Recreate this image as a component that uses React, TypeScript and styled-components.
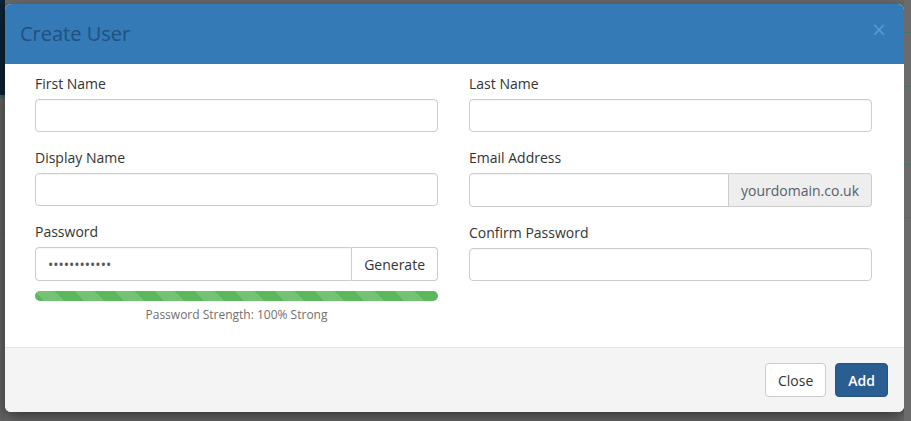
import React from 'react';
import styled, { createGlobalStyle } from 'styled-components';

const GlobalStyle = createGlobalStyle`
  html, body {
    margin: 0;
    padding: 0;
    background: #6a6a6a;
    font-family: "Open Sans", "Liberation Sans", sans-serif;
    font-size: 14px;
    color: #333;
  }
  * { box-sizing: border-box; }
`;

type Field = {
  label: string;
  kind?: 'text' | 'password' | 'addon';
  addon?: string;
};

const leftFields: Field[] = [
  { label: 'First Name' },
  { label: 'Display Name' },
  { label: 'Password', kind: 'password' },
];

const rightFields: Field[] = [
  { label: 'Last Name' },
  { label: 'Email Address', kind: 'addon', addon: 'yourdomain.co.uk' },
  { label: 'Confirm Password' },
];

function FormField({ field }: { field: Field }) {
  if (field.kind === 'password') {
    return (
      <Group>
        <Label>{field.label}</Label>
        <InputGroup>
          <Input type="password" defaultValue="Xk7pQ2mZr9Lb" grouped />
          <GroupButton type="button">Generate</GroupButton>
        </InputGroup>
        <Progress>
          <ProgressBar style={{ width: '100%' }} />
        </Progress>
        <Strength>Password Strength: 100% Strong</Strength>
      </Group>
    );
  }
  if (field.kind === 'addon') {
    return (
      <Group>
        <Label>{field.label}</Label>
        <InputGroup>
          <Input type="text" grouped />
          <Addon>{field.addon}</Addon>
        </InputGroup>
      </Group>
    );
  }
  return (
    <Group>
      <Label>{field.label}</Label>
      <Input type="text" />
    </Group>
  );
}

export default function App() {
  return (
    <>
      <GlobalStyle />
      <Stage>
        <LeftEdge />
        <Modal>
          <Header>
            <Title>Create User</Title>
            <CloseX aria-label="Close">×</CloseX>
          </Header>
          <Body>
            <Column>
              {leftFields.map(f => <FormField key={f.label} field={f} />)}
            </Column>
            <Column>
              {rightFields.map(f => <FormField key={f.label} field={f} />)}
            </Column>
          </Body>
          <Footer>
            <Button type="button">Close</Button>
            <Button type="button" primary>Add</Button>
          </Footer>
        </Modal>
        <RightEdge />
      </Stage>
    </>
  );
}

const Stage = styled.div`
  display: flex;
  align-items: flex-start;
  width: 911px;
  height: 421px;
  overflow: hidden;
  background: #6a6a6a;
`;
const LeftEdge = styled.div`
  width: 5px;
  height: 421px;
  flex: none;
  background: linear-gradient(
    to bottom,
    #0d2235 0px,
    #0d2235 95px,
    #2d6a6c 95px,
    #2d6a6c 98px,
    #646464 98px,
    #646464 233px,
    #3f6a6c 233px,
    #3f6a6c 234px,
    #646464 234px
  );
`;
const RightEdge = styled.div`
  flex: 1;
  height: 421px;
  background: linear-gradient(
    to bottom,
    #6b6b6b 0px,
    #6b6b6b 32px,
    #4a7272 32px,
    #4a7272 33px,
    #6b6b6b 33px,
    #6b6b6b 86px,
    #4a7272 86px,
    #4a7272 87px,
    #6b6b6b 87px,
    #6b6b6b 164px,
    #4a7272 164px,
    #4a7272 165px,
    #6b6b6b 165px,
    #6b6b6b 217px,
    #4a7272 217px,
    #4a7272 218px,
    #6b6b6b 218px
  );
`;
const Modal = styled.div`
  width: 899px;
  flex: none;
  margin-top: 4px;
  background: #fff;
  border-radius: 6px;
  box-shadow: 0 5px 15px rgba(0, 0, 0, 0.5);
  overflow: hidden;
  display: flex;
  flex-direction: column;
`;
const Header = styled.div`
  height: 60px;
  background: #337ab7;
  display: flex;
  align-items: center;
  justify-content: space-between;
  padding: 0 17px 0 15px;
`;
const Title = styled.h4`
  margin: 0;
  font-size: 20px;
  font-weight: 400;
  line-height: 1.2;
  color: #21507f;
`;
const CloseX = styled.button`
  border: 0;
  background: transparent;
  padding: 0;
  margin-top: -10px;
  font-family: "DejaVu Sans", "Liberation Sans", sans-serif;
  font-size: 19px;
  font-weight: 400;
  line-height: 1;
  color: rgba(255, 255, 255, 0.22);
  cursor: pointer;
`;
const Body = styled.div`
  display: grid;
  grid-template-columns: 403px 403px;
  column-gap: 31px;
  align-items: start;
  padding: 10px 32px 24px 30px;
`;
const Column = styled.div`
  display: flex;
  flex-direction: column;
  gap: 16px;
`;
const Group = styled.div`
  display: flex;
  flex-direction: column;
`;
const Label = styled.label`
  display: block;
  height: 20px;
  font-size: 14px;
  font-weight: 500;
  line-height: 20px;
  color: #333;
  margin-bottom: 5px;
`;
const Input = styled.input<{ grouped?: boolean }>`
  height: 34px;
  width: 100%;
  min-width: 0;
  flex: 1;
  padding: 6px 12px;
  font-family: "Open Sans", "Liberation Sans", sans-serif;
  font-size: 14px;
  color: #555;
  background: #fff;
  border: 1px solid #ccc;
  border-radius: ${props => (props.grouped ? '4px 0 0 4px' : '4px')};
  box-shadow: inset 0 1px 1px rgba(0, 0, 0, 0.04);
  outline: none;
`;
const InputGroup = styled.div`
  display: flex;
  height: 34px;
`;
const Addon = styled.span`
  display: flex;
  align-items: center;
  padding: 0 12px;
  font-size: 14px;
  color: #56606a;
  background: #eee;
  border: 1px solid #ccc;
  border-left: 0;
  border-radius: 0 4px 4px 0;
  white-space: nowrap;
`;
const GroupButton = styled.button`
  padding: 0 12px;
  font-family: "Open Sans", "Liberation Sans", sans-serif;
  font-size: 14px;
  color: #333;
  background: #fff;
  border: 1px solid #ccc;
  border-left: 0;
  border-radius: 0 4px 4px 0;
  white-space: nowrap;
`;
const Progress = styled.div`
  height: 10px;
  margin-top: 10px;
  border-radius: 5px;
  background: #f5f5f5;
  overflow: hidden;
`;
const ProgressBar = styled.div`
  height: 100%;
  background-color: #5cb85c;
  background-image: linear-gradient(
    45deg,
    rgba(255, 255, 255, 0.15) 25%,
    transparent 25%,
    transparent 50%,
    rgba(255, 255, 255, 0.15) 50%,
    rgba(255, 255, 255, 0.15) 75%,
    transparent 75%,
    transparent
  );
  background-size: 40px 40px;
`;
const Strength = styled.div`
  margin-top: 5px;
  text-align: center;
  font-size: 12px;
  line-height: 17px;
  color: #707070;
`;
const Footer = styled.div`
  display: flex;
  justify-content: flex-end;
  gap: 9px;
  padding: 15px 16px 15px 15px;
  background: #f4f4f4;
  border-top: 1px solid #e5e5e5;
`;
const Button = styled.button<{ primary?: boolean }>`
  height: 34px;
  padding: 0 12px;
  font-family: "Open Sans", "Liberation Sans", sans-serif;
  font-size: 14px;
  font-weight: ${props => (props.primary ? 600 : 400)};
  color: ${props => (props.primary ? '#fff' : '#333')};
  background: ${props => (props.primary ? '#2a5d92' : '#fff')};
  border: 1px solid ${props => (props.primary ? '#245283' : '#ccc')};
  border-radius: 4px;
  cursor: pointer;
`;
